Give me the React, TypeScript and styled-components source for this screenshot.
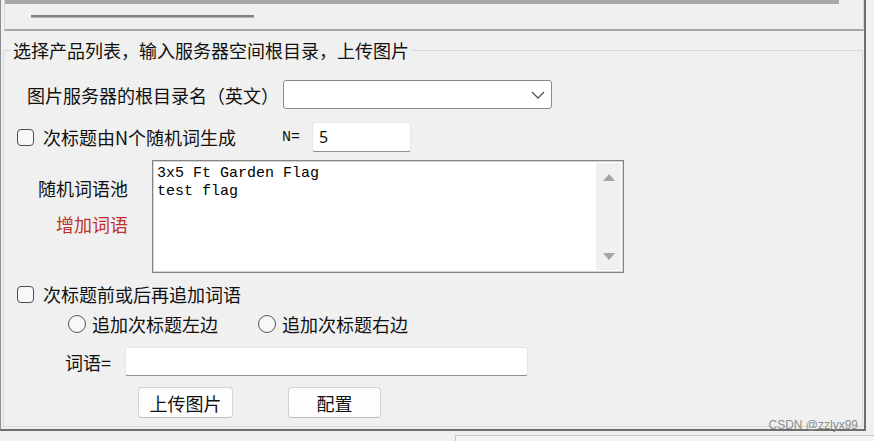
import React from "react";
import styled, { createGlobalStyle } from "styled-components";

const GlobalStyle = createGlobalStyle`
  html, body { margin: 0; padding: 0; background: #f0f0f0; }
  body {
    width: 874px; height: 441px; overflow: hidden;
    font-family: "Noto Sans CJK SC", "Noto Sans", sans-serif;
    color: #111;
  }
  * { box-sizing: border-box; }
`;

const Page = styled.div`
  position: relative;
  width: 874px;
  height: 441px;
  display: flex;
  flex-direction: column;
`;

const Frame = styled.div`
  width: 866px;
  height: 431px;
  border-left: 1px solid #8c8c8c;
  border-right: 2px solid #6e6e6e;
  border-bottom: 2px solid #6e6e6e;
  display: flex;
  flex-direction: column;
`;

const TopStrip = styled.div`
  height: 31px;
  flex: none;
  margin-left: 3px;
  border-left: 1px solid #d6d6d6;
  border-right: 1px solid #d6d6d6;
  border-bottom: 2px solid #a6a6a6;
  display: flex;
  flex-direction: column;
`;

const TopBar = styled.div`
  width: 834px;
  height: 4px;
  background: #a8a8a8;
`;

const SliderTrack = styled.div`
  margin: 11px 0 0 26px;
  width: 223px;
  height: 3px;
  background: #808080;
  border-bottom: 1px solid #b4b4b4;
`;

const GroupBox = styled.fieldset`
  flex: 1;
  margin: 10px 1px 2px 2px;
  padding: 0;
  min-width: 0;
  border: 1px solid #d9d9d9;
`;

const GroupTitle = styled.legend`
  margin-left: 7px;
  padding: 0 2px;
  font-size: 18px;
  line-height: 18px;
  height: 18px;
`;

const Content = styled.div`
  display: flex;
  flex-direction: column;
`;

const Row = styled.div<{ $top: number; $h: number; $left?: number }>`
  display: flex;
  align-items: center;
  margin-top: ${(p) => p.$top}px;
  height: ${(p) => p.$h}px;
  padding-left: ${(p) => p.$left ?? 0}px;
`;

const Label = styled.span<{ $w?: number; $color?: string }>`
  font-size: 18px;
  line-height: 18px;
  white-space: nowrap;
  flex: none;
  width: ${(p) => (p.$w ? `${p.$w}px` : "auto")};
  color: ${(p) => p.$color ?? "#111"};
`;

const Select = styled.div`
  width: 269px;
  height: 29px;
  background: #fff;
  border: 1px solid #8a8a8a;
  border-radius: 3px;
  display: flex;
  align-items: center;
  justify-content: flex-end;
  padding-right: 6px;
`;

const TextBox = styled.div<{ $w: number; $h: number }>`
  width: ${(p) => p.$w}px;
  height: ${(p) => p.$h}px;
  background: #fff;
  border: 1px solid #e6e6e6;
  border-bottom: 1px solid #8c8c8c;
  border-radius: 3px;
  display: flex;
  align-items: center;
  padding-left: 6px;
  font-family: "Noto Sans", sans-serif;
  font-size: 16px;
`;

const CheckField = styled.div<{ $w?: number }>`
  display: flex;
  align-items: center;
  gap: 9px;
  flex: none;
  width: ${(p) => (p.$w ? `${p.$w}px` : "auto")};
`;

const CheckBox = styled.span`
  width: 17px;
  height: 17px;
  flex: none;
  border: 1px solid #4d4d4d;
  border-radius: 4px;
  background: #f8f8f8;
`;

const RadioOption = styled.div<{ $w?: number }>`
  display: flex;
  align-items: center;
  gap: 6px;
  flex: none;
  width: ${(p) => (p.$w ? `${p.$w}px` : "auto")};
`;

const RadioDot = styled.span`
  width: 18px;
  height: 18px;
  flex: none;
  border: 1px solid #555;
  border-radius: 50%;
  background: #f8f8f8;
`;

const MonoLabel = styled.span`
  font-family: "Liberation Mono", monospace;
  font-size: 15px;
  width: 30px;
  flex: none;
`;

const PoolRow = styled.div`
  display: flex;
  margin-top: 8px;
  height: 113px;
`;

const PoolLabels = styled.div`
  width: 148px;
  flex: none;
  display: flex;
  flex-direction: column;
  align-items: flex-end;
  padding: 19px 24px 0 0;
  gap: 18px;
`;

const TextArea = styled.div`
  width: 472px;
  height: 113px;
  background: #fff;
  border: 1px solid #858585;
  box-shadow: inset 0 0 0 1px #d2d2d2;
  display: flex;
`;

const AreaText = styled.div`
  flex: 1;
  padding: 4px 0 0 4px;
  font-family: "Liberation Mono", monospace;
  font-size: 15px;
  line-height: 18px;
  color: #000;
  white-space: pre;
`;

const ScrollBar = styled.div`
  width: 25px;
  margin: 2px 2px 2px 0;
  background: #f0f0f0;
  display: flex;
  flex-direction: column;
  justify-content: space-between;
  align-items: center;
  padding: 11px 0 10px;
`;

const Button = styled.div<{ $w: number; $ml: number }>`
  width: ${(p) => p.$w}px;
  height: 31px;
  margin-left: ${(p) => p.$ml}px;
  background: #fdfdfd;
  border: 1px solid #d3d3d3;
  border-bottom-color: #bdbdbd;
  border-radius: 4px;
  display: flex;
  align-items: center;
  justify-content: center;
  font-size: 18px;
`;

const Footer = styled.div`
  flex: 1;
  display: flex;
  justify-content: flex-end;
`;

const FooterBox = styled.div`
  width: 419px;
  margin-top: 4px;
  background: #f4f4f4;
  border-top: 1px solid #c6c6c6;
  border-left: 1px solid #c6c6c6;
`;

const Watermark = styled.span`
  position: absolute;
  right: 16px;
  bottom: 9px;
  font-family: "Liberation Sans", Arial, sans-serif;
  font-size: 12px;
  line-height: 14px;
  color: #8e8e8e;
`;

const Chevron = () => (
  <svg width="14" height="8" viewBox="0 0 14 8">
    <path d="M1 1 L7 7 L13 1" fill="none" stroke="#555" strokeWidth="1.3" />
  </svg>
);

const Arrow = ({ down }: { down?: boolean }) => (
  <svg width="12" height="7" viewBox="0 0 12 7">
    <path d={down ? "M0 0 H12 L6 7 Z" : "M0 7 H12 L6 0 Z"} fill="#a5a5a5" />
  </svg>
);

export default function App() {
  return (
    <Page>
      <GlobalStyle />
      <Frame>
        <TopStrip>
          <TopBar />
          <SliderTrack />
        </TopStrip>
        <GroupBox>
          <GroupTitle>选择产品列表，输入服务器空间根目录，上传图片</GroupTitle>
          <Content>
            <Row $top={21} $h={29} $left={23}>
              <Label $w={256}>图片服务器的根目录名（英文）</Label>
              <Select>
                <Chevron />
              </Select>
            </Row>
            <Row $top={13} $h={30} $left={13}>
              <CheckField $w={265}>
                <CheckBox />
                <Label>次标题由N个随机词生成</Label>
              </CheckField>
              <MonoLabel>N=</MonoLabel>
              <TextBox $w={99} $h={30}>5</TextBox>
            </Row>
            <PoolRow>
              <PoolLabels>
                <Label>随机词语池</Label>
                <Label $color="#c3302c">增加词语</Label>
              </PoolLabels>
              <TextArea>
                <AreaText>{"3x5 Ft Garden Flag\ntest flag"}</AreaText>
                <ScrollBar>
                  <Arrow />
                  <Arrow down />
                </ScrollBar>
              </TextArea>
            </PoolRow>
            <Row $top={11} $h={20} $left={13}>
              <CheckField>
                <CheckBox />
                <Label>次标题前或后再追加词语</Label>
              </CheckField>
            </Row>
            <Row $top={10} $h={20} $left={64}>
              <RadioOption $w={190}>
                <RadioDot />
                <Label>追加次标题左边</Label>
              </RadioOption>
              <RadioOption>
                <RadioDot />
                <Label>追加次标题右边</Label>
              </RadioOption>
            </Row>
            <Row $top={13} $h={29} $left={61}>
              <Label $w={60}>词语=</Label>
              <TextBox $w={403} $h={29} />
            </Row>
            <Row $top={11} $h={31}>
              <Button $w={95} $ml={134}>上传图片</Button>
              <Button $w={93} $ml={55}>配置</Button>
            </Row>
          </Content>
        </GroupBox>
      </Frame>
      <Footer>
        <FooterBox />
      </Footer>
      <Watermark>CSDN @zzlyx99</Watermark>
    </Page>
  );
}
